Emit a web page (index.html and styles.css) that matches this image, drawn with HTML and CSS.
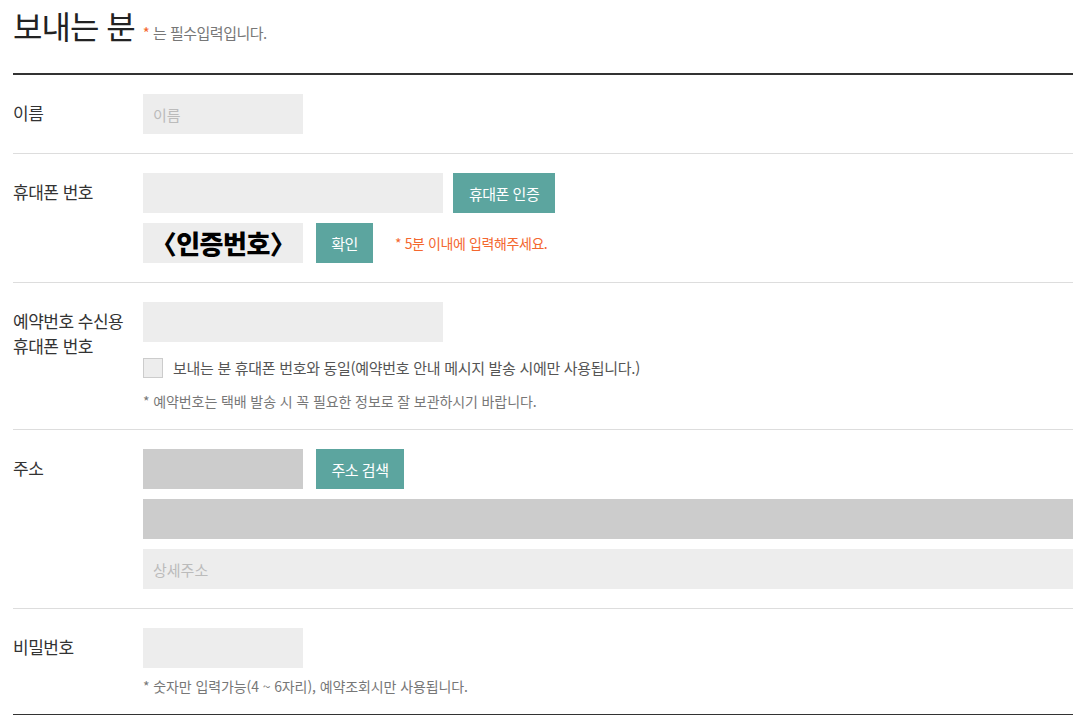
FILE: index.html
```html
<!DOCTYPE html>
<html lang="ko">
<head>
    <meta charset="UTF-8">
    <meta name="viewport" content="width=device-width, initial-scale=1.0">
    <title>보내는 분</title>
    <link rel="stylesheet" href="styles.css">
</head>
<body>
    <div class="wrap">
        <div class="title">
            <h2>보내는 분</h2>
            <span class="required"><em>*</em> 는 필수입력입니다.</span>
        </div>

        <form class="sender">
            <div class="row">
                <label class="label" for="name">이름</label>
                <div class="field">
                    <input type="text" id="name" class="input small" placeholder="이름">
                </div>
            </div>

            <div class="row">
                <label class="label" for="phone">휴대폰 번호</label>
                <div class="field">
                    <div class="line">
                        <input type="text" id="phone" class="input wide">
                        <button type="button" class="btn">휴대폰 인증</button>
                    </div>
                    <div class="line">
                        <div class="captcha">〈인증번호〉</div>
                        <button type="button" class="btn btn-ok">확인</button>
                        <span class="warn">* 5분 이내에 입력해주세요.</span>
                    </div>
                </div>
            </div>

            <div class="row">
                <label class="label" for="recv">예약번호 수신용<br>휴대폰 번호</label>
                <div class="field">
                    <input type="text" id="recv" class="input wide">
                    <label class="check">
                        <input type="checkbox">
                        <span class="box"></span>
                        보내는 분 휴대폰 번호와 동일(예약번호 안내 메시지 발송 시에만 사용됩니다.)
                    </label>
                    <p class="note">* 예약번호는 택배 발송 시 꼭 필요한 정보로 잘 보관하시기 바랍니다.</p>
                </div>
            </div>

            <div class="row">
                <label class="label" for="zip">주소</label>
                <div class="field gap10">
                    <div class="line">
                        <input type="text" id="zip" class="input small gray" readonly>
                        <button type="button" class="btn btn-addr">주소 검색</button>
                    </div>
                    <input type="text" class="input full gray" readonly>
                    <input type="text" class="input full" placeholder="상세주소">
                </div>
            </div>

            <div class="row last">
                <label class="label" for="pw">비밀번호</label>
                <div class="field">
                    <input type="password" id="pw" class="input small">
                    <p class="note note-pw">* 숫자만 입력가능(4 ~ 6자리), 예약조회시만 사용됩니다.</p>
                </div>
            </div>
        </form>
    </div>
</body>
</html>
```

FILE: styles.css
```css
body {
    margin: 0;
    font-family: "Noto Sans CJK KR", "Noto Sans", sans-serif;
    color: #333;
    background: #fff;
}
.wrap {
    width: 1060px;
    margin-left: 13px;
}
.title {
    display: flex;
    align-items: baseline;
    height: 73px;
}
.title h2 {
    margin: 0;
    padding-top: 5px;
    font-size: 32px;
    font-weight: normal;
    letter-spacing: -1px;
    line-height: 40px;
    color: #222;
}
.required {
    margin-left: 8px;
    font-size: 15px;
    color: #777;
    letter-spacing: -0.5px;
}
.required em {
    font-style: normal;
    color: #f4672f;
}
.sender {
    border-top: 2px solid #333;
}
.row {
    display: flex;
    padding: 19px 0;
    border-bottom: 1px solid #ddd;
}
.row.last {
    border-bottom-color: #333;
}
.label {
    width: 130px;
    flex-shrink: 0;
    padding-top: 6px;
    font-size: 17px;
    line-height: 25px;
    letter-spacing: -0.5px;
    color: #333;
}
.field {
    flex: 1;
    display: flex;
    flex-direction: column;
    align-items: flex-start;
}
.field.gap10 {
    gap: 10px;
}
.line {
    display: flex;
    align-items: center;
}
.line + .line {
    margin-top: 10px;
}
.input {
    box-sizing: border-box;
    height: 40px;
    padding: 0 10px;
    border: none;
    background: #ededed;
    font-family: inherit;
    font-size: 15px;
    color: #333;
    outline: none;
}
.input::placeholder {
    color: #bbb;
}
.input.small {
    width: 160px;
}
.input.wide {
    width: 300px;
}
.input.full {
    width: 930px;
}
.input.gray {
    background: #ccc;
}
.btn {
    height: 40px;
    margin-left: 10px;
    padding: 0 16px;
    border: none;
    background: #5ca59f;
    color: #fff;
    font-family: inherit;
    font-size: 15px;
    letter-spacing: -0.5px;
    cursor: pointer;
}
.btn-ok {
    width: 57px;
    margin-left: 13px;
    padding: 0;
}
.btn-addr {
    width: 88px;
    margin-left: 13px;
    padding: 0;
}
.captcha {
    width: 160px;
    height: 40px;
    background: #ededed;
    text-align: center;
    font-size: 26px;
    font-weight: 900;
    line-height: 40px;
    color: #000;
    letter-spacing: -0.5px;
}
.warn {
    margin-left: 22px;
    font-size: 14px;
    color: #f4672f;
    letter-spacing: -0.4px;
}
.check {
    display: flex;
    align-items: center;
    margin-top: 15px;
    font-size: 15px;
    color: #555;
    letter-spacing: -0.3px;
    cursor: pointer;
}
.check input {
    display: none;
}
.check .box {
    box-sizing: border-box;
    width: 20px;
    height: 20px;
    margin-right: 10px;
    background: #ededed;
    border: 1px solid #ccc;
}
.note {
    margin: 14px 0 0;
    font-size: 14px;
    line-height: 18px;
    color: #777;
    letter-spacing: -0.1px;
}
.note-pw {
    margin-top: 9px;
}
```
